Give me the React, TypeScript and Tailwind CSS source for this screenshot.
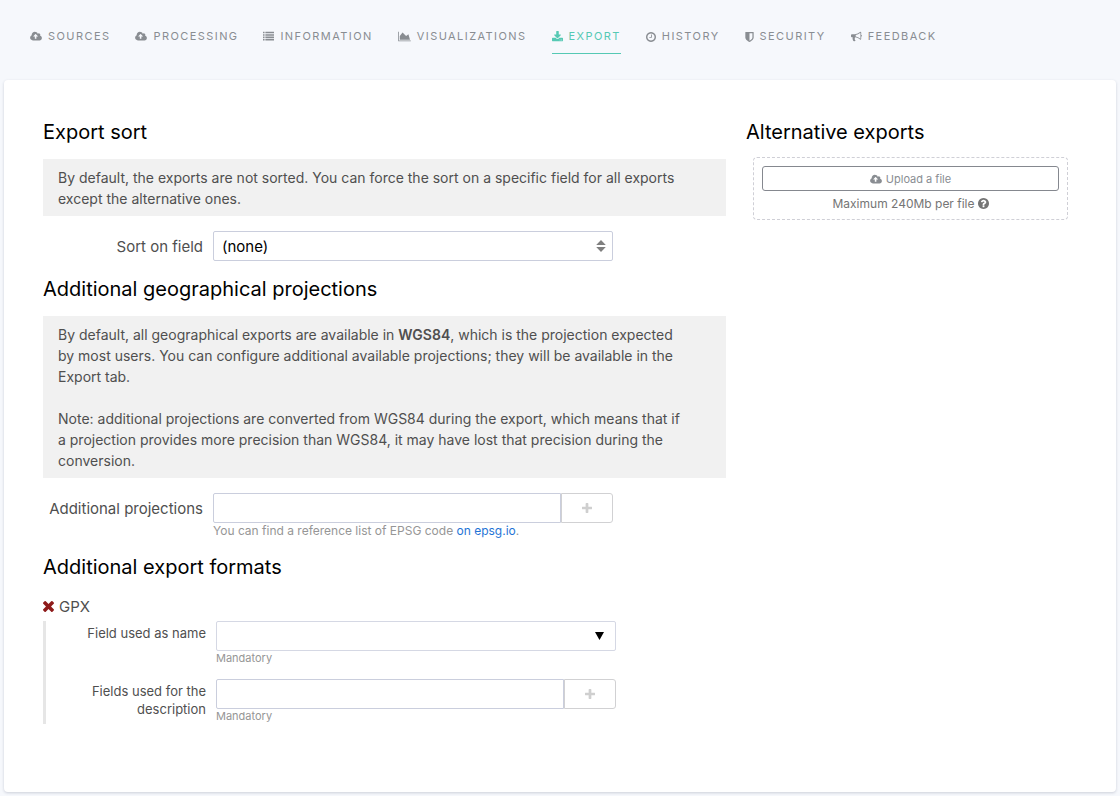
import type { ReactNode } from "react";

type IconProps = { className?: string };

function Glyph({ box, className = "", children }: { box: string; className?: string; children: ReactNode }) {
  return (
    <svg viewBox={box} fill="currentColor" aria-hidden="true" className={`shrink-0 ${className}`}>
      {children}
    </svg>
  );
}

const CloudUpload = ({ className = "h-[11px] w-3" }: IconProps) => (
  <Glyph box="0 0 1920 1792" className={className}>
    <path d="M1280 864q0-14-9-23l-352-352q-9-9-23-9t-23 9l-351 351q-10 12-10 24 0 14 9 23t23 9h224v352q0 13 9.5 22.5t22.5 9.5h192q13 0 22.5-9.5t9.5-22.5v-352h224q13 0 22.5-9.5t9.5-22.5zm640 288q0 159-112.5 271.5t-271.5 112.5h-1088q-185 0-316.5-131.5t-131.5-316.5q0-130 70-240t188-165q-2-30-2-43 0-212 150-362t362-150q156 0 285.5 87t188.5 231q71-62 166-62 106 0 181 75t75 181q0 76-41 138 130 31 213.5 135.5t83.5 238.5z" />
  </Glyph>
);

const List = () => (
  <Glyph box="0 0 1792 1792" className="size-[11px]">
    {[128, 512, 896, 1280].map((y) => (
      <g key={y}>
        <rect x="0" y={y} width="256" height="256" rx="32" />
        <rect x="384" y={y} width="1408" height="256" rx="32" />
      </g>
    ))}
  </Glyph>
);

const AreaChart = () => (
  <Glyph box="0 0 2048 1792" className="h-[11px] w-[13px]">
    <path d="M2048 1536v128h-2048v-1536h128v1408h1920zm-384-1024l256 896h-1664v-576l448-576 576 576z" />
  </Glyph>
);

const Download = () => (
  <Glyph box="64 0 1664 1792" className="h-3 w-[11px]">
    <path d="M1344 1344q0-26-19-45t-45-19-45 19-19 45 19 45 45 19 45-19 19-45zm256 0q0-26-19-45t-45-19-45 19-19 45 19 45 45 19 45-19 19-45zm128-224v320q0 40-28 68t-68 28h-1472q-40 0-68-28t-28-68v-320q0-40 28-68t68-28h465l135 136q58 56 136 56t136-56l136-136h464q40 0 68 28t28 68zm-325-569q17 41-14 70l-448 448q-18 19-45 19t-45-19l-448-448q-31-29-14-70 17-39 59-39h256v-448q0-26 19-45t45-19h256q26 0 45 19t19 45v448h256q42 0 59 39z" />
  </Glyph>
);

const Clock = () => (
  <Glyph box="128 128 1536 1536" className="size-2.5">
    <path d="M1024 544v448q0 14-9 23t-23 9h-320q-14 0-23-9t-9-23v-64q0-14 9-23t23-9h224v-352q0-14 9-23t23-9h64q14 0 23 9t9 23zm416 352q0-148-73-273t-198-198-273-73-273 73-198 198-73 273 73 273 198 198 273 73 273-73 198-198 73-273zm224 0q0 209-103 385.5t-279.5 279.5-385.5 103-385.5-103-279.5-279.5-103-385.5 103-385.5 279.5-279.5 385.5-103 385.5 103 279.5 279.5 103 385.5z" />
  </Glyph>
);

const Shield = () => (
  <Glyph box="256 128 1280 1536" className="h-2.5 w-[9px]">
    <path d="M1344 960v-640h-448v1137q119-63 213-137 235-184 235-360zm192-768v768q0 86-33.5 170.5t-83 150-118 127.5-126.5 103-121 77.5-89.5 49.5-42.5 20q-12 6-26 6t-26-6q-16-7-42.5-20t-89.5-49.5-121-77.5-126.5-103-118-127.5-83-150-33.5-170.5v-768q0-26 19-45t45-19h1152q26 0 45 19t19 45z" />
  </Glyph>
);

const Bullhorn = () => (
  <Glyph box="0 0 1792 1792" className="size-[11px]">
    <path d="M1664 640q53 0 90.5 37.5t37.5 90.5-37.5 90.5-90.5 37.5v384q0 52-38 90t-90 38q-417-347-812-380-58 19-91 66t-31 100.5 40 92.5q-20 33-23 65.5t6 58 33.5 55 48 50 61.5 50.5q-29 58-111.5 83t-168.5 11.5-132-55.5q-7-23-29.5-87.5t-32-94.5-23-89-15-101 3.5-98.5 22-110.5h-122q-66 0-113-47t-47-113v-192q0-66 47-113t113-47h480q435 0 896-384 52 0 90 38t38 90v384zm-128 604v-954q-394 302-768 343v270q377 42 768 341z" />
  </Glyph>
);

const Question = () => (
  <Glyph box="128 128 1536 1536" className="size-[11px]">
    <path d="M1024 1376v-192q0-14-9-23t-23-9h-192q-14 0-23 9t-9 23v192q0 14 9 23t23 9h192q14 0 23-9t9-23zm256-672q0-88-55.5-163t-138.5-116-170-41q-243 0-371 213-15 24 8 42l132 100q7 6 19 6 16 0 25-12 53-68 86-92 34-24 86-24 48 0 85.5 26t37.5 59q0 38-20 61t-68 45q-63 28-115.5 86.5t-52.5 125.5v36q0 14 9 23t23 9h192q14 0 23-9t9-23q0-19 21.5-49.5t54.5-49.5q32-18 49-28.5t46-35 44.5-48 28-60.5 12.5-81zm384 192q0 209-103 385.5t-279.5 279.5-385.5 103-385.5-103-279.5-279.5-103-385.5 103-385.5 279.5-279.5 385.5-103 385.5 103 279.5 279.5 103 385.5z" />
  </Glyph>
);

const Times = () => (
  <Glyph box="302 366 1188 1188" className="size-[11px]">
    <path d="M1490 1322q0 40-28 68l-136 136q-28 28-68 28t-68-28l-294-294-294 294q-28 28-68 28t-68-28l-136-136q-28-28-28-68t28-68l294-294-294-294q-28-28-28-68t28-68l136-136q28-28 68-28t68 28l294 294 294-294q28-28 68-28t68 28l136 136q28 28 28 68t-28 68l-294 294 294 294q28 28 28 68z" />
  </Glyph>
);

const Plus = () => (
  <Glyph box="192 128 1408 1408" className="size-2.5">
    <path d="M1600 736v192q0 40-28 68t-68 28h-416v416q0 40-28 68t-68 28h-192q-40 0-68-28t-28-68v-416h-416q-40 0-68-28t-28-68v-192q0-40 28-68t68-28h416v-416q0-40 28-68t68-28h192q40 0 68 28t28 68v416h416q40 0 68 28t28 68z" />
  </Glyph>
);

const TABS: { label: string; icon: ReactNode }[] = [
  { label: "Sources", icon: <CloudUpload /> },
  { label: "Processing", icon: <CloudUpload /> },
  { label: "Information", icon: <List /> },
  { label: "Visualizations", icon: <AreaChart /> },
  { label: "Export", icon: <Download /> },
  { label: "History", icon: <Clock /> },
  { label: "Security", icon: <Shield /> },
  { label: "Feedback", icon: <Bullhorn /> },
];

function Tabs({ active }: { active: string }) {
  return (
    <nav className="flex h-[76px] items-start gap-[25px] pt-4 pl-[26px]">
      {TABS.map(({ label, icon }) => (
        <a
          key={label}
          href={`#${label.toLowerCase()}`}
          aria-current={label === active ? "page" : undefined}
          className={
            label === active
              ? "flex h-[34px] items-center gap-1.5 border-b border-[#55c9b4] text-[11px] tracking-[0.13em] text-[#55c9b4] uppercase"
              : "flex h-[34px] items-center gap-1.5 border-b border-transparent text-[11px] tracking-[0.13em] text-[#898d92] uppercase"
          }
        >
          {icon}
          {label}
        </a>
      ))}
    </nav>
  );
}

function Heading({ children }: { children: ReactNode }) {
  return <h2 className="mb-[13px] text-[20px] leading-[28px] text-black">{children}</h2>;
}

function Note({ children }: { children: ReactNode }) {
  return (
    <div className="mb-[15px] space-y-[21px] bg-[#f1f1f1] pt-2 pr-10 pb-[7px] pl-[15px] text-[14px]">{children}</div>
  );
}

function Row({ id, label, small, children }: { id: string; label: string; small?: boolean; children: ReactNode }) {
  return (
    <div className="flex gap-2.5">
      <label
        htmlFor={id}
        className={
          small
            ? "w-40 shrink-0 pt-[3px] pl-5 text-right text-[13px] leading-[18px]"
            : "w-40 shrink-0 pt-[5px] text-right"
        }
      >
        {label}
      </label>
      <div className="w-full max-w-[400px]">{children}</div>
    </div>
  );
}

function AddField({ id }: { id: string }) {
  return (
    <div className="flex h-[30px]">
      <input id={id} type="text" className="min-w-0 flex-1 rounded-l-[2px] border border-[#cacedd] bg-white px-2 text-black" />
      <button
        type="button"
        aria-label="Add"
        className="flex w-[52px] items-center justify-center rounded-r-[3px] border border-[#d1d1d3] bg-white text-[#cfcfcf]"
      >
        <Plus />
      </button>
    </div>
  );
}

export default function App() {
  return (
    <div className="flex min-h-screen flex-col bg-[#f6f8fc] p-1 font-['Inter',sans-serif] text-[15px] leading-[21px] text-[#4f4f4f]">
      <Tabs active="Export" />
      <main className="grid flex-1 grid-cols-[minmax(0,683fr)_minmax(0,330fr)] items-start gap-5 rounded-[4px] bg-white pt-[38px] pr-10 pb-16 pl-[39px] shadow-[0_1px_3px_rgba(40,50,80,0.2)]">
        <div className="flex flex-col gap-[14px]">
          <section>
            <Heading>Export sort</Heading>
            <Note>
              <p>
                By default, the exports are not sorted. You can force the sort on a specific field for all exports
                except the alternative ones.
              </p>
            </Note>
            <Row id="sort-field" label="Sort on field">
              <div className="relative">
                <select
                  id="sort-field"
                  className="block h-[30px] w-full appearance-none rounded-[2px] border border-[#cacedd] bg-white px-2 text-black"
                >
                  <option>(none)</option>
                </select>
                <svg
                  viewBox="0 0 10 12"
                  aria-hidden="true"
                  className="pointer-events-none absolute top-[9px] right-[7px] h-3 w-2.5 fill-[#7f7f7f]"
                >
                  <path d="M5 0l4.8 5H.2zM5 12l4.8-5H.2z" />
                </svg>
              </div>
            </Row>
          </section>

          <section>
            <Heading>Additional geographical projections</Heading>
            <Note>
              <p>
                By default, all geographical exports are available in <strong className="font-semibold">WGS84</strong>,
                which is the projection expected by most users. You can configure additional available projections;
                they will be available in the Export tab.
              </p>
              <p>
                Note: additional projections are converted from WGS84 during the export, which means that if a
                projection provides more precision than WGS84, it may have lost that precision during the conversion.
              </p>
            </Note>
            <Row id="projections" label="Additional projections">
              <AddField id="projections" />
              <p className="text-[12px] leading-4 text-[#969696]">
                You can find a reference list of EPSG code{" "}
                <a href="#epsg" className="text-[#1f74d6]">
                  on epsg.io
                </a>
                .
              </p>
            </Row>
          </section>

          <section>
            <Heading>Additional export formats</Heading>
            <div className="mb-[2px] flex h-[25px] items-center gap-[5px]">
              <button type="button" aria-label="Remove GPX" className="text-[#8e1b1b]">
                <Times />
              </button>
              <span>GPX</span>
            </div>
            <div className="space-y-[13px] border-l-3 border-[#e6e6e6]">
              <Row id="gpx-name" label="Field used as name" small>
                <div className="relative">
                  <select
                    id="gpx-name"
                    className="block h-[30px] w-full appearance-none rounded-[2px] border border-[#d5d8e4] bg-white px-2 text-black"
                  >
                    <option></option>
                  </select>
                  <svg
                    viewBox="0 0 9 8"
                    aria-hidden="true"
                    className="pointer-events-none absolute top-[11px] right-3 h-2 w-[9px] fill-black"
                  >
                    <path d="M0 0h9L4.5 8z" />
                  </svg>
                </div>
                <p className="text-[11px] leading-[15px] text-[#969696]">Mandatory</p>
              </Row>
              <Row id="gpx-description" label="Fields used for the description" small>
                <AddField id="gpx-description" />
                <p className="text-[11px] leading-[15px] text-[#969696]">Mandatory</p>
              </Row>
            </div>
          </section>
        </div>

        <aside>
          <h2 className="mb-[11px] text-[20px] leading-[28px] text-black">Alternative exports</h2>
          <div className="mr-2 ml-[7px] rounded-[4px] border border-dashed border-[#cfcfd6] p-2">
            <button
              type="button"
              className="flex h-[25px] w-full items-center justify-center gap-1 rounded-[3px] border border-[#85888f] pt-px text-[11px] text-[#898d92]"
            >
              <CloudUpload />
              Upload a file
            </button>
            <p className="flex items-center justify-center gap-[3px] pt-[5px] text-[12px] leading-[15px] text-[#757575]">
              Maximum 240Mb per file <Question />
            </p>
          </div>
        </aside>
      </main>
    </div>
  );
}
